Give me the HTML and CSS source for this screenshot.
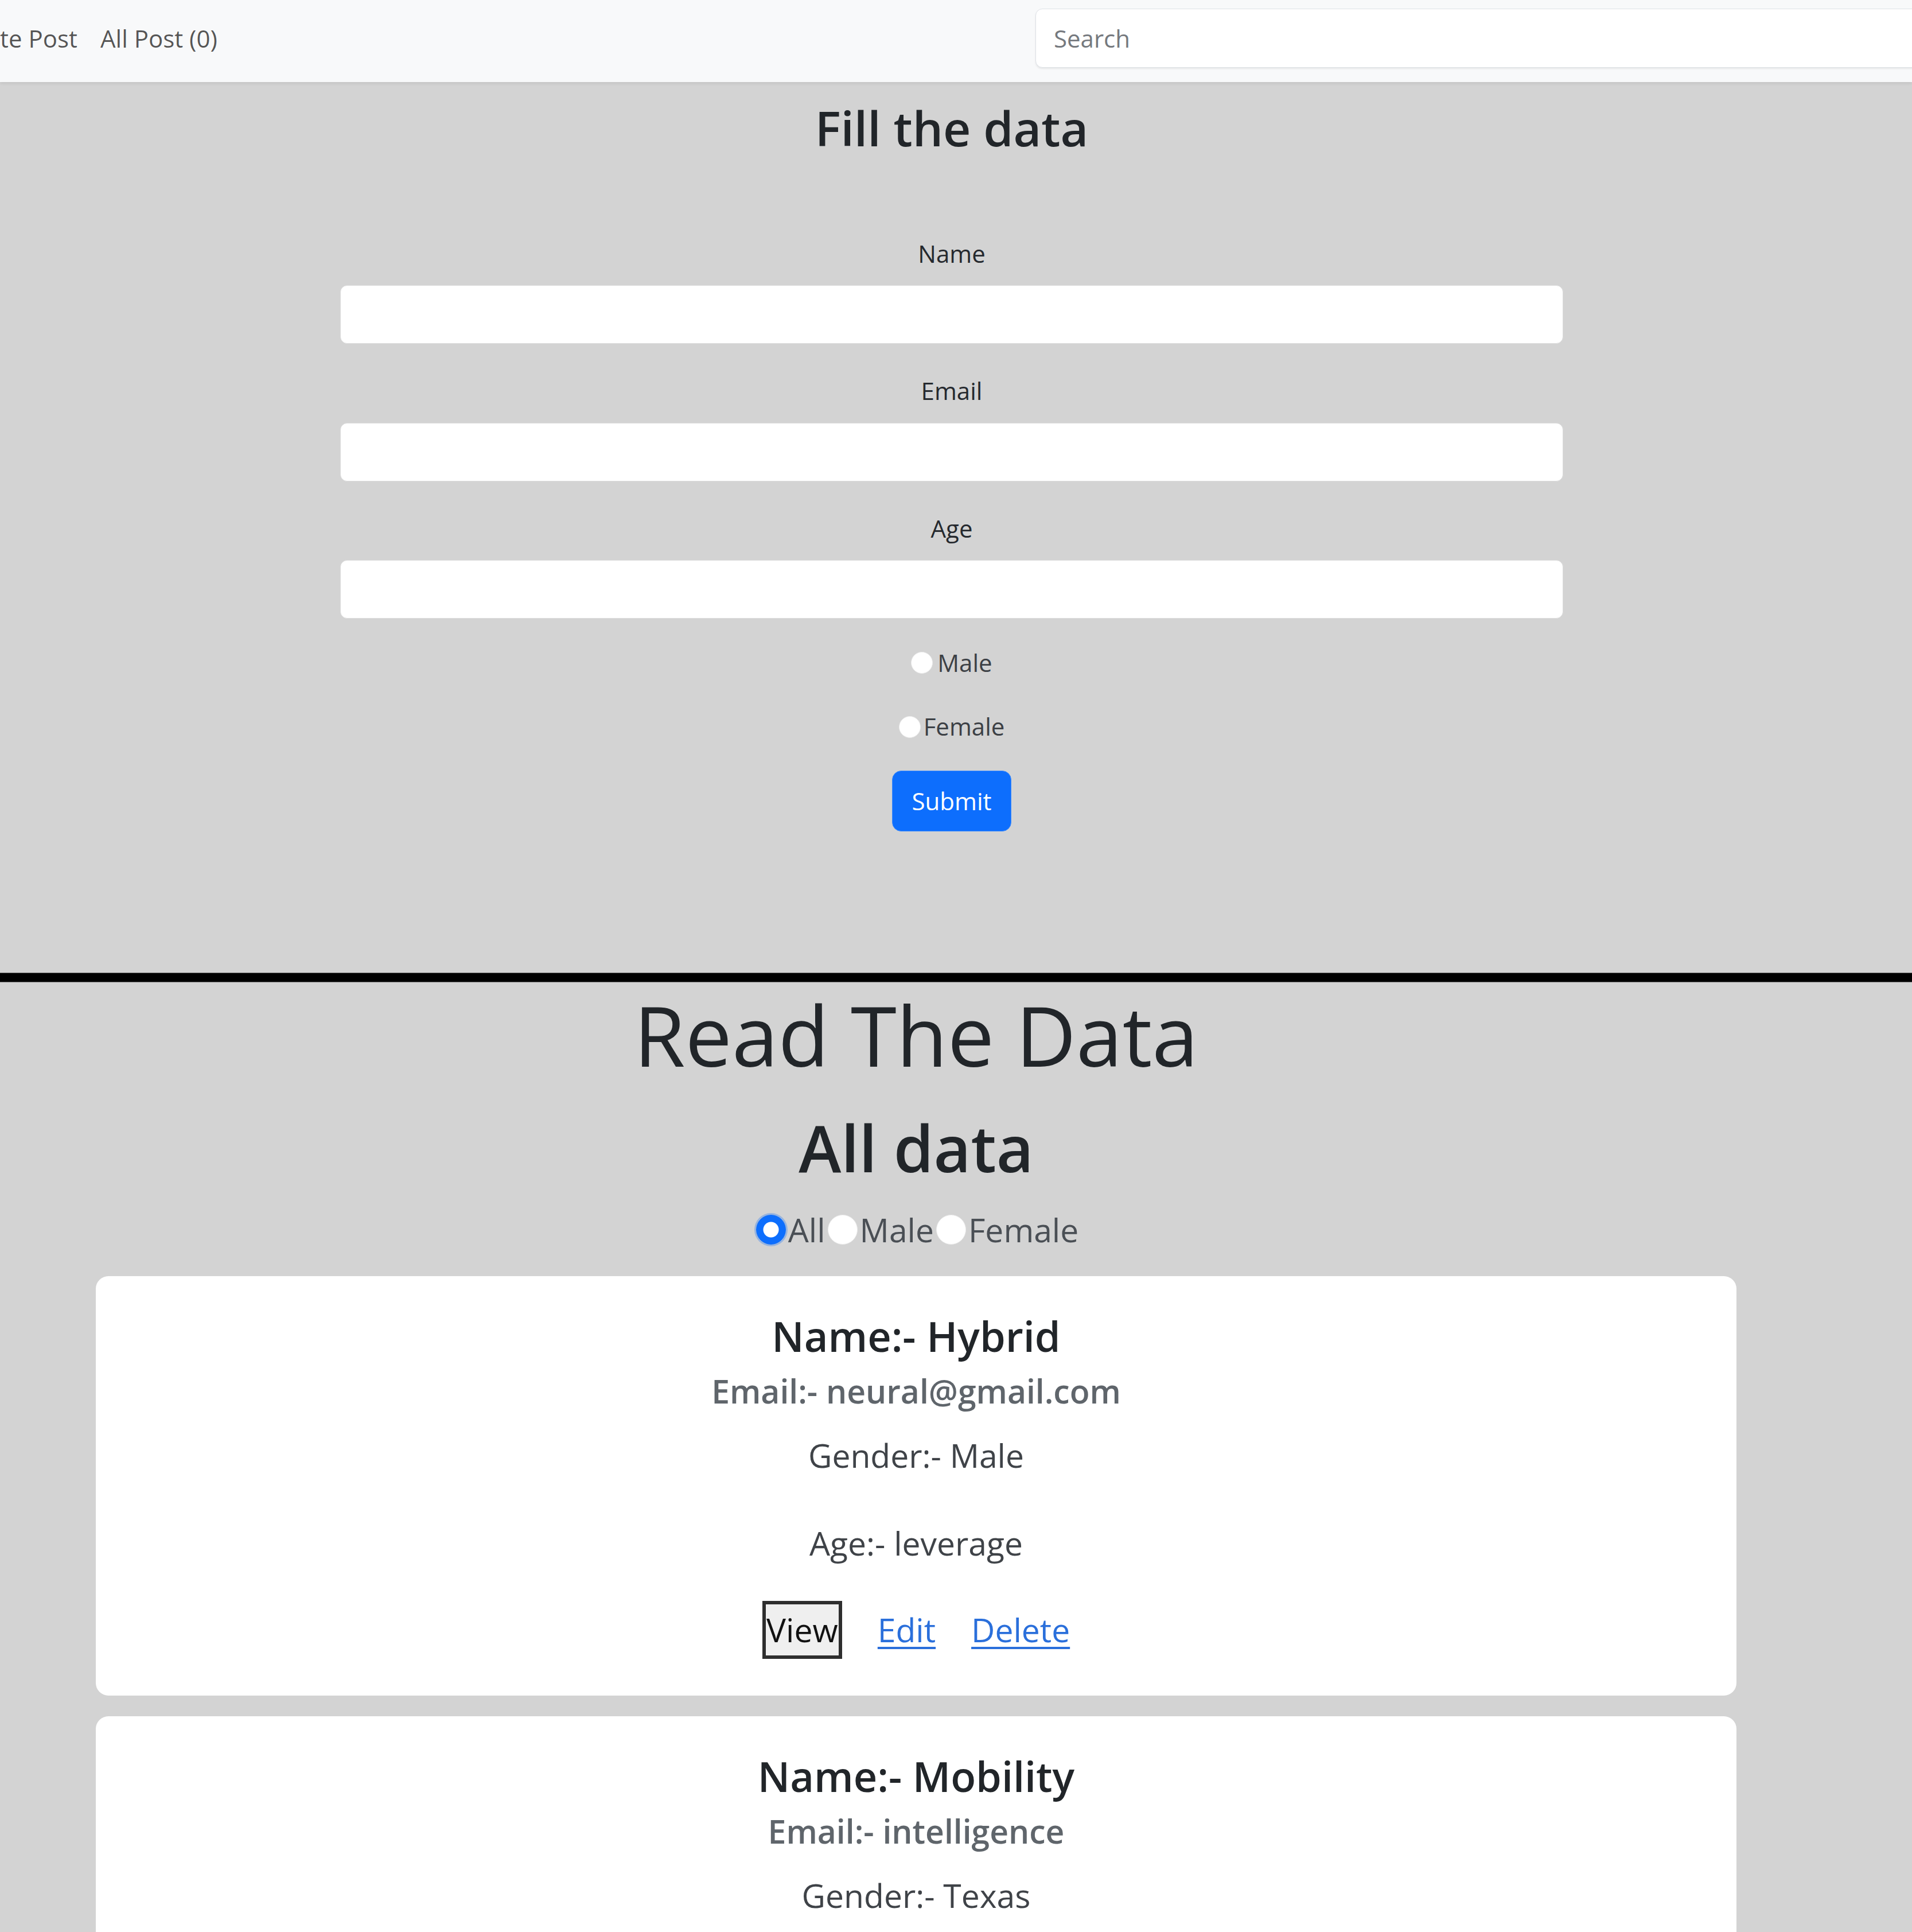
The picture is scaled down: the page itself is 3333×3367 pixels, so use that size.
FILE: index.html
```html
<!DOCTYPE html>
<html lang="en">
<head>
<meta charset="utf-8">
<title>Fill the data</title>
<link rel="stylesheet" href="styles.css">
</head>
<body>
  <header class="navbar">
    <nav class="nav-links">
      <a class="nav-link" href="#">te Post</a>
      <a class="nav-link" href="#">All Post (0)</a>
    </nav>
    <input class="search" type="search" placeholder="Search">
  </header>

  <main class="create">
    <h2 class="form-title">Fill the data</h2>
    <form class="form">
      <div class="field">
        <label class="field-label">Name</label>
        <input class="field-input" type="text">
      </div>
      <div class="field">
        <label class="field-label">Email</label>
        <input class="field-input" type="email">
      </div>
      <div class="field">
        <label class="field-label">Age</label>
        <input class="field-input" type="text">
      </div>
      <label class="gender-option gender-male"><input class="radio" type="radio" name="gender">Male</label>
      <label class="gender-option gender-female"><input class="radio radio-tight" type="radio" name="gender">Female</label>
      <button class="btn-submit" type="button">Submit</button>
    </form>
  </main>

  <div class="divider"></div>

  <section class="read">
    <h1 class="read-title">Read The Data</h1>
    <h2 class="read-subtitle">All data</h2>
    <div class="filter">
      <label class="filter-option"><input class="filter-radio" type="radio" name="filter" checked>All</label>
      <label class="filter-option"><input class="filter-radio" type="radio" name="filter">Male</label>
      <label class="filter-option"><input class="filter-radio" type="radio" name="filter">Female</label>
    </div>

    <article class="card">
      <h5 class="card-title">Name:- Hybrid</h5>
      <h6 class="card-subtitle">Email:- neural@gmail.com</h6>
      <p class="card-text card-gender">Gender:- Male</p>
      <p class="card-text card-age">Age:- leverage</p>
      <div class="card-actions">
        <button class="btn-view" type="button">View</button>
        <a class="card-link" href="#">Edit</a>
        <a class="card-link" href="#">Delete</a>
      </div>
    </article>

    <article class="card card-second">
      <h5 class="card-title">Name:- Mobility</h5>
      <h6 class="card-subtitle">Email:- intelligence</h6>
      <p class="card-text card-gender">Gender:- Texas</p>
    </article>
  </section>
</body>
</html>
```

FILE: styles.css
```css
* {
  box-sizing: border-box;
}

html, body {
  margin: 0;
  padding: 0;
}

body {
  width: 3333px;
  height: 3367px;
  overflow: hidden;
  font-family: "Open Sans", "Noto Sans", sans-serif;
  color: #212529;
  background: #d3d3d3;
}

/* ---------- navbar ---------- */
.navbar {
  position: relative;
  z-index: 1;
  display: grid;
  grid-template-columns: 1805px 1600px;
  align-items: start;
  height: 143px;
  padding-top: 15px;
  background: #f8f9fa;
  box-shadow: 0 3px 5px rgba(0, 0, 0, 0.07);
  overflow: hidden;
}

.nav-links {
  display: flex;
  gap: 40px;
  margin-top: 27px;
}

.nav-link {
  font-size: 42px;
  line-height: 1.2;
  color: rgba(0, 0, 0, 0.66);
  text-decoration: none;
  white-space: nowrap;
}

.search {
  height: 103px;
  width: 1600px;
  padding: 0 31px;
  border: 1px solid #dee2e6;
  border-radius: 12px;
  background: #fff;
  font-family: inherit;
  font-size: 42px;
  color: #212529;
  box-shadow: 0 2px 3px rgba(0, 0, 0, 0.08);
  outline: none;
}

.search::placeholder {
  color: #75797e;
}

/* ---------- create form ---------- */
.create {
  padding: 30px 15px 246px 0;
  text-align: center;
}

.form-title {
  margin: 0;
  font-size: 84px;
  line-height: 1.2;
  font-weight: 600;
  color: #212529;
}

.form {
  display: flex;
  flex-direction: column;
  align-items: center;
  margin-top: 143px;
}

.field {
  display: flex;
  flex-direction: column;
  align-items: center;
  width: 2132px;
}

.field + .field {
  margin-top: 57px;
}

.field-label {
  font-size: 42px;
  line-height: 1.2;
  margin-bottom: 30px;
  color: #25292e;
}

.field-input {
  width: 100%;
  height: 102px;
  border: 1px solid #dcdcdc;
  border-radius: 12px;
  background: #fff;
  font-family: inherit;
  font-size: 42px;
  padding: 0 30px;
  outline: none;
}

.gender-option {
  display: flex;
  align-items: center;
  font-size: 42px;
  line-height: 1.2;
  color: #3c4045;
}

.gender-male {
  margin-top: 52px;
}

.gender-female {
  margin-top: 61px;
}

.radio {
  appearance: none;
  -webkit-appearance: none;
  width: 38px;
  height: 38px;
  margin: 0 8px 0 0;
  border-radius: 50%;
  background: #fff;
  border: 1px solid #ececec;
}

.radio-tight {
  margin-right: 5px;
}

.btn-submit {
  margin-top: 51px;
  width: 208px;
  height: 106px;
  padding: 0;
  border: 1px solid #3d8bfd;
  border-radius: 16px;
  background: #0d6efd;
  color: #fff;
  font-family: inherit;
  font-size: 42px;
  line-height: 1.5;
}

/* ---------- divider ---------- */
.divider {
  height: 17px;
  background: #000;
  border-top: 1px solid #6a6a6a;
  border-bottom: 1px solid #6a6a6a;
}

/* ---------- read section ---------- */
.read {
  padding: 4px 139px 0 0;
  text-align: center;
}

.read-title {
  margin: 0;
  font-size: 145px;
  line-height: 1.2;
  font-weight: 500;
  color: #212529;
}

.read-subtitle {
  margin: 43px 0 0;
  font-size: 112px;
  line-height: 1.2;
  font-weight: 600;
  color: #212529;
}

.filter {
  display: flex;
  justify-content: center;
  align-items: center;
  margin-top: 42px;
  font-size: 57px;
  line-height: 1.2;
  color: #4a4f55;
}

.filter-option {
  display: flex;
  align-items: center;
}

.filter-radio {
  appearance: none;
  -webkit-appearance: none;
  width: 52px;
  height: 52px;
  margin: 0 4px;
  border-radius: 50%;
  background: #fff;
  border: 1px solid #ededed;
}

.filter-radio:checked {
  background: radial-gradient(circle, #fff 0 13px, #0d6efd 14px);
  border-color: #0d6efd;
  box-shadow: 0 0 0 3px rgba(13, 110, 253, 0.3);
}

.card {
  margin: 46px 167px 0;
  min-height: 731px;
  padding: 61px 40px 60px;
  background: #fff;
  border-radius: 22px;
}

.card-second {
  margin-top: 36px;
}

.card-title {
  margin: 0;
  font-size: 72px;
  line-height: 1.2;
  font-weight: 600;
  color: #212529;
}

.card-subtitle {
  margin: 19px 0 0;
  font-size: 57px;
  line-height: 1.2;
  font-weight: 600;
  color: #5f656b;
}

.card-text {
  margin: 0;
  font-size: 57px;
  line-height: 1.2;
  color: #3f4348;
}

.card-gender {
  margin-top: 44px;
}

.card-age {
  margin-top: 84px;
}

.card-actions {
  display: flex;
  justify-content: center;
  align-items: baseline;
  gap: 62px;
  margin-top: 67px;
  font-size: 57px;
}

.btn-view {
  width: 139px;
  height: 101px;
  padding: 0;
  border: 6px solid #2e2e2e;
  background: #efefef;
  color: #111;
  font-family: inherit;
  font-size: 57px;
  line-height: 89px;
  white-space: nowrap;
  overflow: visible;
}

.card-link {
  line-height: 1.2;
  color: #2a6fdb;
  text-decoration: underline;
  text-decoration-thickness: 4px;
  text-underline-offset: 8px;
}
```
